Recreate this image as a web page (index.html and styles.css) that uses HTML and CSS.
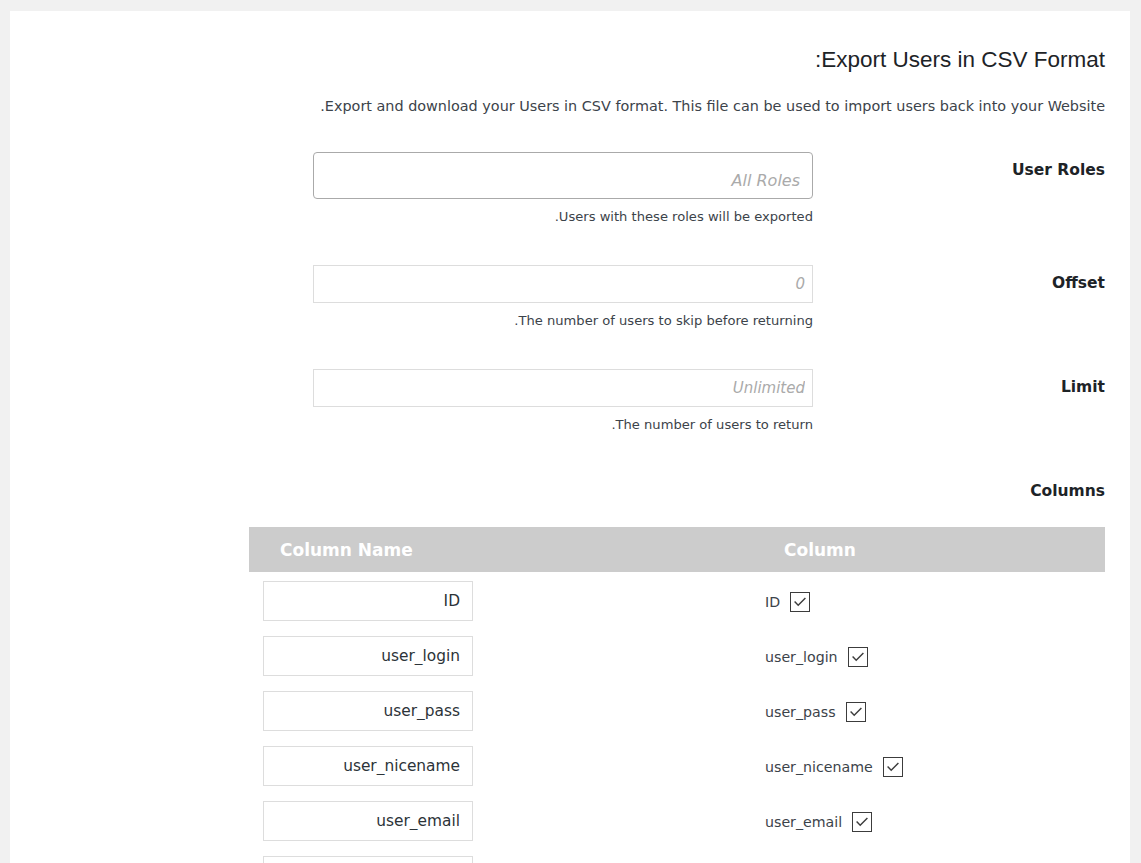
FILE: index.html
```html
<!DOCTYPE html>
<html lang="en" dir="rtl">

<head>
  <meta charset="UTF-8" />
  <title>Export Users</title>

  <link rel="stylesheet" href="styles.css">
</head>

<body>
  <div class="panel">
    <h2 class="title">Export Users in CSV Format:</h2>
    <p class="intro">Export and download your Users in CSV format. This file can be used to import users back into your Website.</p>

    <div class="field-row">
      <label class="field-label" for="roles">User Roles</label>
      <div class="field">
        <input class="text-input roles-input" id="roles" type="text" placeholder="All Roles">
        <p class="hint">Users with these roles will be exported.</p>
      </div>
    </div>

    <div class="field-row">
      <label class="field-label" for="offset">Offset</label>
      <div class="field">
        <input class="text-input" id="offset" type="text" placeholder="0">
        <p class="hint">The number of users to skip before returning.</p>
      </div>
    </div>

    <div class="field-row">
      <label class="field-label" for="limit">Limit</label>
      <div class="field">
        <input class="text-input" id="limit" type="text" placeholder="Unlimited">
        <p class="hint">The number of users to return.</p>
      </div>
    </div>

    <h3 class="columns-title">Columns</h3>

    <div class="columns">
      <div class="col-head col-key">Column</div>
      <div class="col-head col-name">Column Name</div>

      <div class="col-key"><label class="check"><span class="box"><svg viewBox="0 0 20 20"><path d="M4 9.5 L8 13.5 L16 5.5" /></svg></span><span>ID</span></label></div>
      <div class="col-name"><input class="name-input" type="text" value="ID"></div>

      <div class="col-key"><label class="check"><span class="box"><svg viewBox="0 0 20 20"><path d="M4 9.5 L8 13.5 L16 5.5" /></svg></span><span>user_login</span></label></div>
      <div class="col-name"><input class="name-input" type="text" value="user_login"></div>

      <div class="col-key"><label class="check"><span class="box"><svg viewBox="0 0 20 20"><path d="M4 9.5 L8 13.5 L16 5.5" /></svg></span><span>user_pass</span></label></div>
      <div class="col-name"><input class="name-input" type="text" value="user_pass"></div>

      <div class="col-key"><label class="check"><span class="box"><svg viewBox="0 0 20 20"><path d="M4 9.5 L8 13.5 L16 5.5" /></svg></span><span>user_nicename</span></label></div>
      <div class="col-name"><input class="name-input" type="text" value="user_nicename"></div>

      <div class="col-key"><label class="check"><span class="box"><svg viewBox="0 0 20 20"><path d="M4 9.5 L8 13.5 L16 5.5" /></svg></span><span>user_email</span></label></div>
      <div class="col-name"><input class="name-input" type="text" value="user_email"></div>

      <div class="col-key"><label class="check"><span class="box"><svg viewBox="0 0 20 20"><path d="M4 9.5 L8 13.5 L16 5.5" /></svg></span><span>user_url</span></label></div>
      <div class="col-name"><input class="name-input" type="text" value="user_url"></div>
    </div>
  </div>
</body>

</html>
```

FILE: styles.css
```css
body {
  margin: 0;
  background: #f1f1f1;
  font-family: "DejaVu Sans", Tahoma, sans-serif;
  color: #1d2327;
}

.panel {
  margin: 11px 11px 0 10px;
  padding: 26px 25px 0 0;
  background: #fff;
  min-height: 900px;
}

.title {
  margin: 0;
  font-family: "Liberation Sans", Arial, sans-serif;
  font-size: 22.5px;
  font-weight: 400;
  line-height: 46px;
}

.intro {
  margin: 0;
  padding-top: 11px;
  font-size: 14.4px;
  line-height: 24px;
  color: #3c434a;
}

.field-row {
  display: flex;
  padding-top: 34px;
}

.field-row + .field-row {
  padding-top: 39px;
}

.field-label {
  width: 292px;
  padding-top: 9px;
  font-size: 15.5px;
  font-weight: 700;
  line-height: 18px;
}

.field {
  width: 500px;
}

.text-input {
  box-sizing: border-box;
  display: block;
  width: 500px;
  height: 38px;
  margin: 0;
  padding: 0 7px;
  border: 1px solid #ddd;
  border-radius: 0;
  font-family: inherit;
  font-size: 15px;
  background: #fff;
  outline: none;
}

.roles-input {
  height: 47px;
  padding: 9px 12px 0;
  border-color: #aaa;
  border-radius: 4px;
  font-size: 16px;
}

.text-input::placeholder {
  color: #aaa;
  font-style: italic;
}

.hint {
  margin: 9px 0 0;
  font-size: 13.1px;
  line-height: 18px;
  color: #3c434a;
}

.columns-title {
  margin: 0;
  padding-top: 48px;
  font-size: 15.5px;
  font-weight: 700;
  line-height: 18px;
}

.columns {
  display: grid;
  grid-template-columns: 570px 286px;
  grid-template-rows: 45px;
  grid-auto-rows: 55px;
  width: 856px;
  margin-top: 27px;
}

.col-head {
  background: #ccc;
  color: #fff;
  font-size: 17px;
  font-weight: 700;
  line-height: 47px;
  text-align: left;
}

.col-head.col-key {
  padding-left: 249px;
}

.col-head.col-name {
  padding-left: 31px;
}

.col-key:not(.col-head) {
  display: flex;
  justify-content: flex-end;
  align-items: flex-start;
  padding: 20px 0 0 230px;
}

.col-name:not(.col-head) {
  display: flex;
  align-items: flex-start;
  justify-content: flex-end;
  padding: 9px 0 0 14px;
}

.check {
  display: flex;
  align-items: center;
  gap: 10px;
  height: 20px;
  font-size: 14.2px;
  color: #3c434a;
}

.box {
  box-sizing: border-box;
  display: block;
  width: 20px;
  height: 20px;
  border: 1px solid #3c3c3c;
  background: #fff;
}

.box svg {
  display: block;
  width: 18px;
  height: 18px;
  fill: none;
  stroke: #3c3c3c;
  stroke-width: 1.6;
}

.name-input {
  box-sizing: border-box;
  width: 210px;
  height: 40px;
  margin: 0;
  padding: 0 12px;
  border: 1px solid #ddd;
  font-family: inherit;
  font-size: 15.4px;
  color: #2c3338;
  text-align: right;
  outline: none;
}
```
